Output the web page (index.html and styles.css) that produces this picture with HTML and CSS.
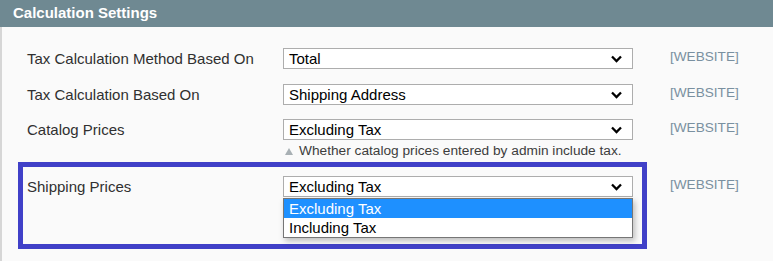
FILE: index.html
```html
<!DOCTYPE html>
<html lang="en">
<head>
  <meta charset="UTF-8">
  <title>Calculation Settings</title>
  <link rel="stylesheet" href="styles.css">
</head>
<body>

  <div class="section-head">Calculation Settings</div>

  <div class="section-body">

    <!-- Fila 1 -->
    <div class="field-row">
      <div class="field-label">Tax Calculation Method Based On</div>
      <div class="field-value">
        <div class="fake-select">Total<svg class="arrow" viewBox="0 0 12 8"><path d="M1.5 1.5 L6 6 L10.5 1.5"/></svg></div>
      </div>
      <div class="scope">[WEBSITE]</div>
    </div>

    <!-- Fila 2 -->
    <div class="field-row">
      <div class="field-label">Tax Calculation Based On</div>
      <div class="field-value">
        <div class="fake-select">Shipping Address<svg class="arrow" viewBox="0 0 12 8"><path d="M1.5 1.5 L6 6 L10.5 1.5"/></svg></div>
      </div>
      <div class="scope">[WEBSITE]</div>
    </div>

    <!-- Fila 3 -->
    <div class="field-row">
      <div class="field-label">Catalog Prices</div>
      <div class="field-value">
        <div class="fake-select">Excluding Tax<svg class="arrow" viewBox="0 0 12 8"><path d="M1.5 1.5 L6 6 L10.5 1.5"/></svg></div>
        <p class="note"><span class="note-tri"></span>Whether catalog prices entered by admin include tax.</p>
      </div>
      <div class="scope">[WEBSITE]</div>
    </div>

    <!-- Fila 4 -->
    <div class="field-row highlighted">
      <div class="field-label">Shipping Prices</div>
      <div class="field-value">
        <div class="fake-select">Excluding Tax<svg class="arrow" viewBox="0 0 12 8"><path d="M1.5 1.5 L6 6 L10.5 1.5"/></svg></div>
        <ul class="options">
          <li class="selected">Excluding Tax</li>
          <li>Including Tax</li>
        </ul>
      </div>
      <div class="scope">[WEBSITE]</div>
    </div>

  </div>

</body>
</html>
```

FILE: styles.css
```css
body {
  margin: 0;
  background-color: #fafafa;
  font-family: Arial, "Liberation Sans", sans-serif;
  color: #303030;
  overflow: hidden;
}
.section-head {
  background-color: #6f8992;
  color: white;
  font-weight: bold;
  font-size: 15px;
  height: 27px;
  line-height: 26px;
  padding-left: 13px;
}
.section-body {
  border-left: 2px solid #d6d6d6;
  padding-top: 21px;
  min-height: calc(100vh - 27px);
  box-sizing: border-box;
}
.field-row {
  display: grid;
  grid-template-columns: 256px 350px auto;
  padding-left: 25px;
  margin-bottom: 14px;
  position: relative;
}
.field-row:first-child {
  margin-bottom: 15px;
}
.field-label {
  font-size: 15px;
  line-height: 21px;
}
.field-value {
  position: relative;
}
.fake-select {
  box-sizing: border-box;
  height: 21px;
  border: 1px solid #adadad;
  background-color: white;
  color: black;
  font-size: 15px;
  line-height: 19px;
  padding-left: 5px;
  position: relative;
}
.arrow {
  position: absolute;
  right: 9px;
  top: 6px;
  width: 13px;
  height: 8px;
  fill: none;
  stroke: black;
  stroke-width: 2.3;
}
.scope {
  margin-left: 37px;
  font-size: 13.6px;
  color: #7990a0;
  line-height: 18px;
}
.note {
  margin: 2px 0 0 1px;
  font-size: 13.7px;
  line-height: 17px;
  color: #3d3d3d;
}
.note-tri {
  display: inline-block;
  width: 0;
  height: 0;
  border-left: 4px solid transparent;
  border-right: 4px solid transparent;
  border-bottom: 7px solid #a8b0b4;
  margin: 0 6px 0 1px;
}
.highlighted {
  margin-top: 17px;
}
.highlighted::before {
  content: "";
  position: absolute;
  left: 16px;
  top: -14px;
  width: 619px;
  height: 77px;
  border: 5px solid #4040c8;
  pointer-events: none;
}
.options {
  position: absolute;
  top: 22px;
  left: 0;
  width: 350px;
  box-sizing: border-box;
  margin: 0;
  padding: 0;
  list-style: none;
  background-color: white;
  border: 1px solid #767676;
  box-shadow: 2px 3px 6px rgba(0, 0, 0, 0.25);
  font-size: 15px;
  color: black;
  z-index: 1;
}
.options li {
  height: 19px;
  line-height: 19px;
  padding-left: 5px;
}
.options li.selected {
  background-color: #1e90ff;
  color: white;
}
```
